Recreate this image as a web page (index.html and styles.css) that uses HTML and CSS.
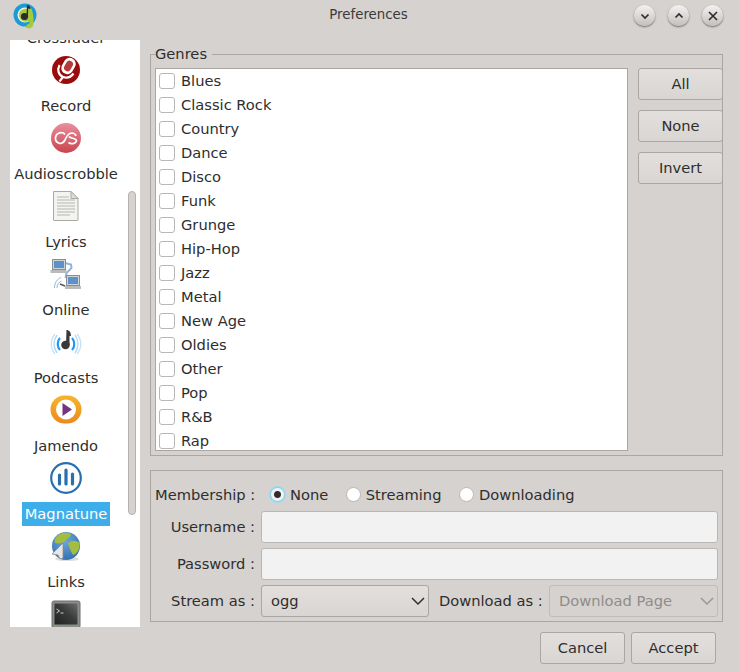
FILE: index.html
```html
<!DOCTYPE html>
<html lang="en">
  <head>
    <meta charset="UTF-8" />
    <title>Preferences</title>
    <link rel="stylesheet" href="styles.css">
  </head>
  <body>
    <div class="window">
      <div class="titlebar">
        <svg class="app-logo" viewBox="0 0 24 28" width="24" height="28">
          <circle cx="12" cy="13" r="11.500" fill="#1b9ad6" />
          <circle cx="12" cy="13" r="7.500" fill="#f2f2e8" />
          <path d="M18 6 C21 12 21 20 20 24 C18 27 15 27 12 25 L15 22 C17 22 17 20 16 19 C11 21 6 18 6 13 C6 8 11 6 15 7 Z" fill="#a4c93a" />
          <circle cx="11.500" cy="14.500" r="3.600" fill="#2e2a2e" />
          <path d="M13.500 14 L14 3 C16 3 17.500 5 17.500 7 L15.200 6.500 L15 14 Z" fill="#2e2a2e" />
        </svg>
        <div class="title">Preferences</div>
        <div class="win-buttons">
          <div class="win-btn">
            <svg viewBox="0 0 12 12" width="12" height="12"><path d="M2.500 4.500 L6 8 L9.500 4.500" /></svg>
          </div>
          <div class="win-btn">
            <svg viewBox="0 0 12 12" width="12" height="12"><path d="M2.500 7.500 L6 4 L9.500 7.500" /></svg>
          </div>
          <div class="win-btn">
            <svg viewBox="0 0 12 12" width="12" height="12"><path d="M2 2 L10 10 M10 2 L2 10" /></svg>
          </div>
        </div>
      </div>

      <div class="content">
        <div class="sidebar">
          <div class="side-list">
            <div class="side-label side-cut">Crossfader</div>

            <div class="side-item">
              <svg class="side-icon" viewBox="0 0 32 32">
                <circle cx="16" cy="16" r="14" fill="#9a0c0c" />
                <rect x="12.500" y="3.500" width="12" height="17" rx="6" transform="rotate(30 18.500 12)" fill="#fff" />
                <rect x="15" y="6.500" width="7" height="11" rx="3.500" transform="rotate(30 18.500 12)" fill="#b53a3a" />
                <path d="M9.500 11 C7 16 8.500 21 13 23 L9.500 27.500" fill="none" stroke="#fff" stroke-width="2.200" />
                <path d="M13 23 C17 24.500 21 23 23.500 19.500" fill="none" stroke="#fff" stroke-width="2.200" />
              </svg>
              <div class="side-label">Record</div>
            </div>

            <div class="side-item">
              <svg class="side-icon" viewBox="0 0 32 32">
                <defs>
                  <linearGradient id="lastfm" x1="0" y1="0" x2="0" y2="1">
                    <stop offset="0" stop-color="#e88f9c" />
                    <stop offset="1" stop-color="#c9444f" />
                  </linearGradient>
                </defs>
                <circle cx="16" cy="16" r="15" fill="url(#lastfm)" />
                <path d="M15 12.500 C13 9.500 6.500 10 5.500 15.500 C5 21.500 12 23.500 15 18 C16.500 15 17.500 11.500 21.500 11 C24 11 25.500 12 26 14 M26.500 18.500 C26 22 21 22.500 18.500 20.500 M19 14.500 C20 16.500 26 16 26.500 18.500" fill="none" stroke="#fff" stroke-width="1.700" />
              </svg>
              <div class="side-label">Audioscrobble</div>
            </div>

            <div class="side-item">
              <svg class="side-icon" viewBox="0 0 32 32">
                <path d="M3.500 1.500 H21 L28 8.500 V30 Q28 30.500 27.500 30.500 H4 Q3.500 30.500 3.500 30 Z" fill="#f3f3f0" stroke="#a9a9a6" />
                <path d="M21 1.500 V8.500 H28 Z" fill="#dcdcd8" stroke="#a9a9a6" />
                <path d="M7 7 H19 M7 10 H25 M7 13 H25 M7 16 H25 M7 19 H25 M7 22 H25 M7 25 H20" stroke="#b5b5b2" stroke-width="1" />
              </svg>
              <div class="side-label">Lyrics</div>
            </div>

            <div class="side-item">
              <svg class="side-icon" viewBox="0 0 32 32">
                <path d="M15 5 L21 6.500 L21.500 10 L16.500 15 L15.500 20" fill="none" stroke="#8fb4e0" stroke-width="2" />
                <path d="M4.500 30 C4.500 25 7 21 11 19.500 M7 30 C7 26.500 9 24 11.500 23" fill="none" stroke="#8fb4e0" stroke-width="1" />
                <path d="M10 26 L15 28" stroke="#555" stroke-width="1.500" />
                <rect x="2.500" y="1.500" width="13" height="10" fill="#d0d3d6" stroke="#8a8e92" />
                <rect x="4" y="3" width="10" height="7" fill="#5b93c9" />
                <rect x="0.500" y="12" width="16" height="3" fill="#b8babc" />
                <rect x="16.500" y="17.500" width="13" height="10" fill="#d0d3d6" stroke="#8a8e92" />
                <rect x="18" y="19" width="10" height="7" fill="#5b93c9" />
                <rect x="15" y="28" width="16" height="3" fill="#b8babc" />
              </svg>
              <div class="side-label">Online</div>
            </div>

            <div class="side-item">
              <svg class="side-icon" viewBox="0 0 32 32">
                <path d="M5 8 C0 14 0 22 5 28 M27 8 C32 14 32 22 27 28" fill="none" stroke="#c4e2f9" stroke-width="1.300" />
                <path d="M7 9 C3 15 3 21 7 27 M25 9 C29 15 29 21 25 27" fill="none" stroke="#a9d6f7" stroke-width="1.300" />
                <path d="M10 12 C7 15 7 21 10 24 M22 12 C25 15 25 21 22 24" fill="none" stroke="#2196f3" stroke-width="2.200" />
                <ellipse cx="15.500" cy="19" rx="4.300" ry="4.200" fill="#3b3838" />
                <path d="M16 18 L16.500 4 C19 4 21 6 21 10 L19.500 10 L19.500 19 Z" fill="#3b3838" />
              </svg>
              <div class="side-label">Podcasts</div>
            </div>

            <div class="side-item">
              <svg class="side-icon" viewBox="0 0 32 32">
                <defs>
                  <linearGradient id="jamendo" x1="0" y1="0" x2="0" y2="1">
                    <stop offset="0" stop-color="#f6b52a" />
                    <stop offset="1" stop-color="#ea8a1e" />
                  </linearGradient>
                </defs>
                <rect x="0.500" y="1.500" width="31" height="28" rx="14" fill="url(#jamendo)" />
                <circle cx="16" cy="15.500" r="10" fill="#fff" />
                <path d="M12.500 9 L22 15.500 L12.500 22 Z" fill="#73357f" />
              </svg>
              <div class="side-label">Jamendo</div>
            </div>

            <div class="side-item">
              <svg class="side-icon" viewBox="0 0 32 32">
                <circle cx="16" cy="16" r="14.800" fill="none" stroke="#2b6eaf" stroke-width="2.200" />
                <path d="M9.500 13 V22 M16 8 V22 M22.500 12 V22" stroke="#2b6eaf" stroke-width="3.200" stroke-linecap="round" />
              </svg>
              <div class="side-label side-active">Magnatune</div>
            </div>

            <div class="side-item">
              <svg class="side-icon" viewBox="0 0 32 32">
                <defs>
                  <radialGradient id="globe" cx="0.450" cy="0.300" r="0.800">
                    <stop offset="0" stop-color="#6fa8dc" />
                    <stop offset="1" stop-color="#2c69ad" />
                  </radialGradient>
                </defs>
                <ellipse cx="17" cy="29" rx="12" ry="2" fill="#ddd" />
                <circle cx="16" cy="16" r="14" fill="url(#globe)" />
                <path d="M7 6 C11 2 18 2 21 4 C21 8 16 8 14 12 C11 13 8 14 5 13 C4 10 5 8 7 6 Z M18 13 C22 10 26 10 29.500 13 C30 19 27 24 23 25 C21 21 19 18 18 13 Z" fill="#a3bd3f" />
                <path d="M13 13 L2 24 L8 25 L10 29 L13 28 Z" fill="#e6e6e6" stroke="#8c8c8c" stroke-width="0.800" />
              </svg>
              <div class="side-label">Links</div>
            </div>

            <div class="side-item">
              <svg class="side-icon" viewBox="0 0 32 32">
                <defs>
                  <linearGradient id="screen" x1="1" y1="0" x2="0" y2="1">
                    <stop offset="0" stop-color="#6a6c6a" />
                    <stop offset="0.450" stop-color="#3a3c3b" />
                    <stop offset="1" stop-color="#1f2120" />
                  </linearGradient>
                </defs>
                <rect x="2" y="3" width="28" height="27" rx="2" fill="#8b8d8a" stroke="#6b6d6a" />
                <rect x="4.500" y="5.500" width="23" height="21" fill="url(#screen)" />
                <path d="M6.500 11 L9.500 13 L6.500 15 M10.500 15 H13.500" fill="none" stroke="#ddd" stroke-width="0.900" />
                <rect x="5" y="27" width="2" height="1.500" fill="#7fb13a" />
              </svg>
            </div>
          </div>
          <div class="side-scroll"><div class="side-thumb"></div></div>
        </div>

        <div class="main">
          <fieldset class="group genres">
            <legend>Genres</legend>
            <div class="genre-row">
              <div class="genre-list">
                <label class="genre"><input type="checkbox" />Blues</label>
                <label class="genre"><input type="checkbox" />Classic Rock</label>
                <label class="genre"><input type="checkbox" />Country</label>
                <label class="genre"><input type="checkbox" />Dance</label>
                <label class="genre"><input type="checkbox" />Disco</label>
                <label class="genre"><input type="checkbox" />Funk</label>
                <label class="genre"><input type="checkbox" />Grunge</label>
                <label class="genre"><input type="checkbox" />Hip-Hop</label>
                <label class="genre"><input type="checkbox" />Jazz</label>
                <label class="genre"><input type="checkbox" />Metal</label>
                <label class="genre"><input type="checkbox" />New Age</label>
                <label class="genre"><input type="checkbox" />Oldies</label>
                <label class="genre"><input type="checkbox" />Other</label>
                <label class="genre"><input type="checkbox" />Pop</label>
                <label class="genre"><input type="checkbox" />R&amp;B</label>
                <label class="genre"><input type="checkbox" />Rap</label>
              </div>
              <div class="genre-buttons">
                <button class="btn">All</button>
                <button class="btn">None</button>
                <button class="btn">Invert</button>
              </div>
            </div>
          </fieldset>

          <div class="group account">
            <div class="field-label field-label-top">Membership :</div>
            <div class="radios">
              <label class="radio"><input type="radio" name="member" class="focused" checked />None</label>
              <label class="radio"><input type="radio" name="member" />Streaming</label>
              <label class="radio"><input type="radio" name="member" />Downloading</label>
            </div>
            <div class="field-label">Username :</div>
            <input class="text-input" type="text" />
            <div class="field-label">Password :</div>
            <input class="text-input" type="password" />
            <div class="field-label">Stream as :</div>
            <div class="combo-row">
              <div class="combo combo-stream">
                <span>ogg</span>
                <svg viewBox="0 0 14 14" width="14" height="14"><path d="M1 4 L7 10 L13 4" /></svg>
              </div>
              <div class="field-label combo-label">Download as :</div>
              <div class="combo combo-off">
                <span>Download Page</span>
                <svg viewBox="0 0 14 14" width="14" height="14"><path d="M1 4 L7 10 L13 4" /></svg>
              </div>
            </div>
          </div>

          <div class="footer">
            <button class="btn">Cancel</button>
            <button class="btn">Accept</button>
          </div>
        </div>
      </div>
    </div>
  </body>
</html>
```
FILE: styles.css
```css
* {
  box-sizing: border-box;
  font-family: "DejaVu Sans", sans-serif;
}

body {
  margin: 0px;
  background-color: #d6d2cf;
  color: #2e2e2e;
  font-size: 14.67px;
  overflow: hidden;
}

.window {
  width: 739px;
  height: 671px;
  overflow: hidden;
}

.titlebar {
  height: 40px;
  display: flex;
  align-items: flex-start;
  padding: 2px 16px 0px 13px;
}

.app-logo {
  flex: none;
}

.title {
  flex: 1;
  text-align: center;
  font-size: 13.33px;
  line-height: 26px;
  padding-left: 66px;
  color: #3a3a3a;
}

.win-buttons {
  display: flex;
  gap: 13px;
  padding: 3px 0px 0px 0px;
}

.win-btn {
  width: 21px;
  height: 21px;
  border-radius: 50%;
  background: linear-gradient(#f4f2f1, #c3bfbc);
  box-shadow: 0px 1px 2px #666;
  display: flex;
  align-items: center;
  justify-content: center;
}

.win-btn path {
  fill: none;
  stroke: #2e2e2e;
  stroke-width: 1.7;
}

.content {
  display: flex;
  gap: 10px;
  padding: 0px 16px 0px 10px;
}

/* left list */

.sidebar {
  flex: none;
  width: 130px;
  height: 587px;
  background-color: #fff;
  overflow: hidden;
  display: flex;
}

.side-list {
  width: 112px;
  flex: none;
}

.side-item {
  padding-top: 4px;
  display: flex;
  flex-direction: column;
  align-items: center;
  height: 68px;
}

.side-icon {
  width: 32px;
  height: 32px;
  flex: none;
  margin-bottom: 8px;
}

.side-label {
  height: 24px;
  line-height: 24px;
  padding: 0px 3px;
  text-align: center;
  white-space: nowrap;
}

.side-cut {
  margin-top: -14px;
}

.side-active {
  background-color: #3daee9;
  color: #fff;
}

.side-scroll {
  width: 18px;
  padding: 151px 4px 0px 6px;
}

.side-thumb {
  height: 324px;
  background-color: #d6d2cf;
  border: 1px solid #b5b1ae;
  border-radius: 4px;
}

/* right side */

.main {
  flex: 1;
  min-width: 0px;
}

.group {
  border: 1px solid #aaa6a3;
  margin: 0px;
}

.genres {
  margin-top: 4px;
  padding: 4px 0px 4px 4px;
  min-width: 0px;
}

.genres legend {
  padding: 0px 5px 0px 0px;
  line-height: 20px;
  margin-left: 0px;
}

.genre-row {
  display: flex;
  gap: 10px;
}

.genre-list {
  width: 473px;
  height: 383px;
  background-color: #fff;
  border: 1px solid #aaa6a3;
  overflow: hidden;
  flex: none;
}

.genre {
  display: flex;
  align-items: center;
  height: 24px;
  padding: 0px 0px 2px 3px;
}

.genre input {
  appearance: none;
  width: 16px;
  height: 16px;
  margin: 2px 6px 0px 0px;
  background-color: #fff;
  border: 1px solid #bab6b3;
  border-radius: 3px;
}

.genre-buttons {
  flex: 1;
  display: flex;
  flex-direction: column;
  gap: 10px;
}

.btn {
  height: 32px;
  width: 85px;
  padding: 0px 0px 2px 0px;
  font-size: 14.67px;
  color: #2e2e2e;
  background: linear-gradient(#e2dfdc, #d9d5d2);
  border: 1px solid #aaa6a3;
  border-radius: 3px;
}

.account {
  margin-top: 14px;
  height: 152px;
  display: grid;
  grid-template-columns: 100px minmax(0px, 1fr);
  grid-template-rows: 24px 32px 32px 32px;
  row-gap: 5px;
  column-gap: 6px;
  align-items: center;
  padding: 11px 4px 4px 4px;
}

.field-label {
  text-align: right;
  white-space: nowrap;
  padding-bottom: 2px;
}

.field-label-top {
  padding-bottom: 0px;
}

.radios {
  display: flex;
  gap: 17.5px;
  padding: 0px 0px 0px 9px;
}

.radio {
  display: flex;
  align-items: center;
}

.radio input {
  appearance: none;
  width: 15px;
  height: 15px;
  margin: 0px 5px 0px 0px;
  background-color: #fff;
  border: 1px solid #bab6b3;
  border-radius: 50%;
}

.radio input:checked {
  background: radial-gradient(circle, #2e2e2e 0px, #2e2e2e 3px, #f2f2f2 4px);
}

.radio input.focused {
  border-color: #7fd0f2;
  box-shadow: 0px 0px 0px 1px #9adaf5;
}

.text-input {
  height: 32px;
  width: 100%;
  background-color: #f2f2f2;
  border: 1px solid #bab6b3;
  border-radius: 3px;
  outline: none;
}

.combo-row {
  display: flex;
  align-items: center;
}

.combo-label {
  margin-left: 10px;
}

.combo {
  height: 32px;
  display: flex;
  align-items: center;
  justify-content: space-between;
  padding: 0px 3px 2px 9px;
  border: 1px solid #aaa6a3;
  border-radius: 3px;
}

.combo svg {
  margin-top: 2px;
}

.combo svg path {
  fill: none;
  stroke: #2e2e2e;
  stroke-width: 1.5;
}

.combo-stream {
  width: 168px;
  flex: none;
  background: linear-gradient(#e2dfdc, #d9d5d2);
}

.combo-off {
  width: 169px;
  flex: none;
  margin-left: auto;
  color: #8f8c8a;
  border-color: #c0bcb9;
}

.combo-off svg path {
  stroke: #9a9795;
}

.footer {
  display: flex;
  justify-content: flex-end;
  gap: 6px;
  padding: 10px 7px 0px 0px;
}
```
